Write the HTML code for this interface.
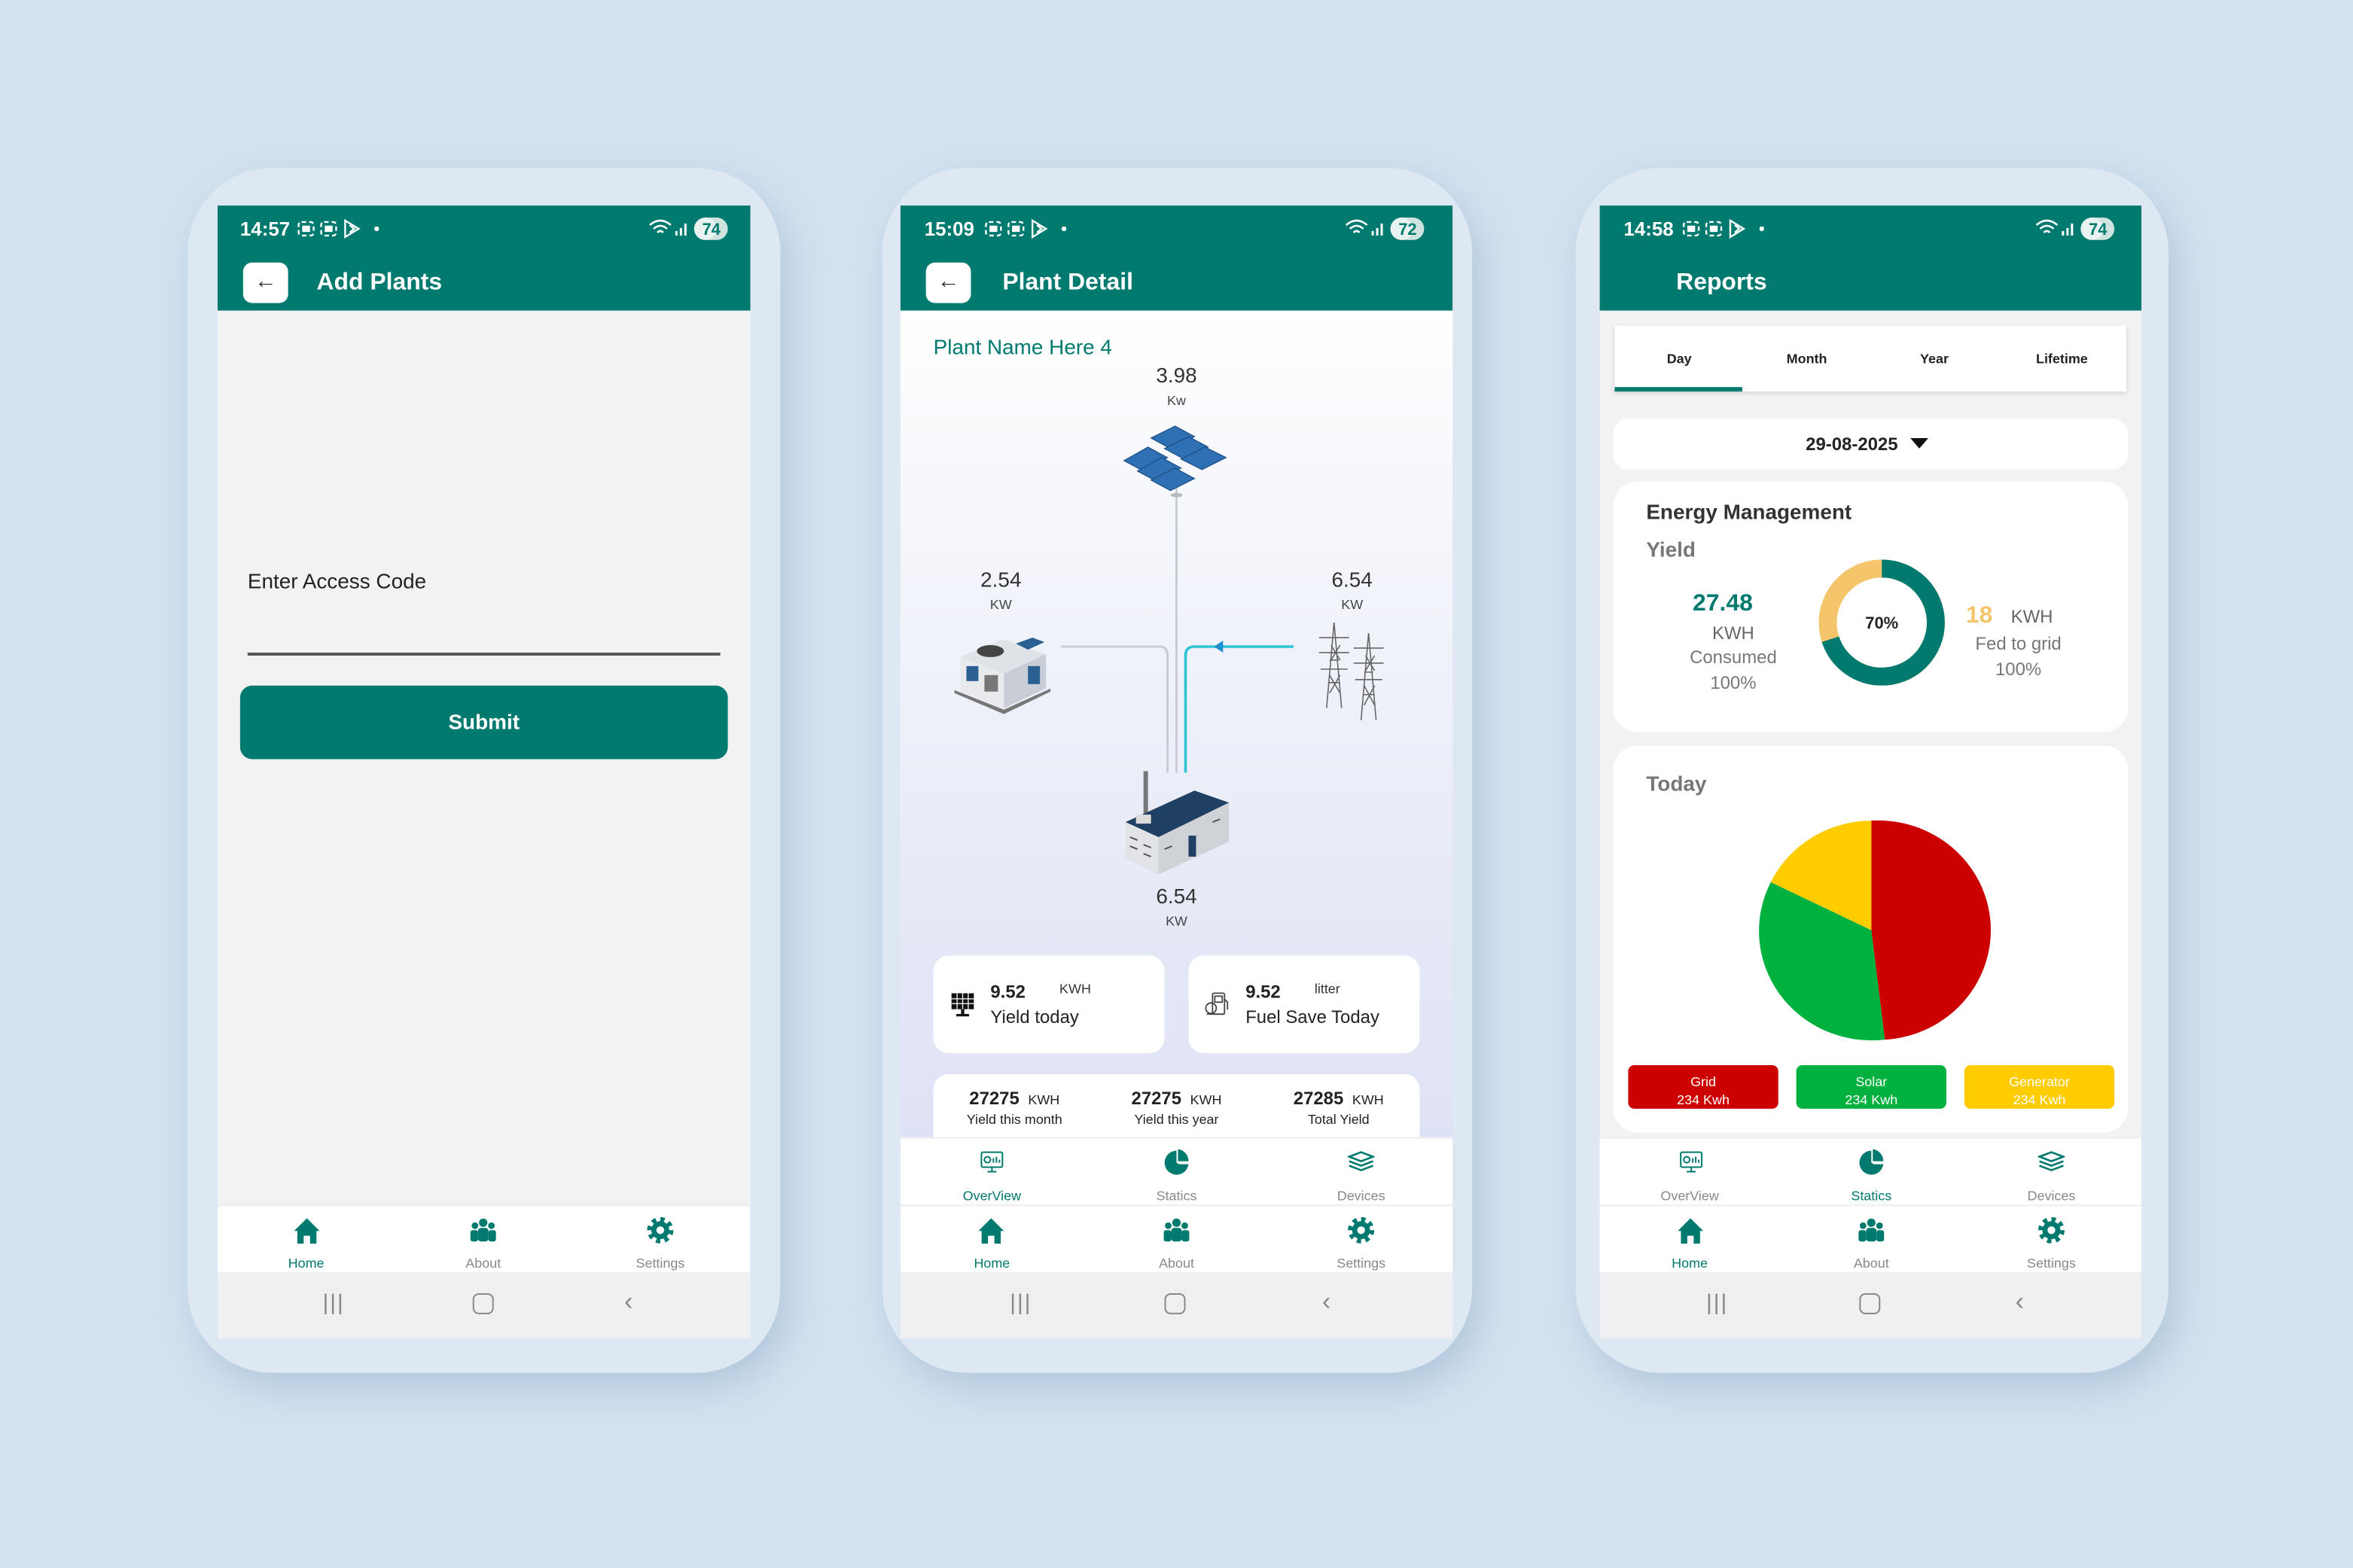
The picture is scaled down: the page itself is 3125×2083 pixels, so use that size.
<!DOCTYPE html>
<html><head><meta charset="utf-8">
<style>
*{margin:0;padding:0;box-sizing:border-box}
html,body{width:3125px;height:2083px;overflow:hidden;background:#d3e2f0}
#w{position:absolute;left:0;top:0;width:1568px;height:1045px;transform:scale(1.993);transform-origin:0 0;font-family:"Liberation Sans",sans-serif;background:#d3e2f0}
.a{position:absolute}
.frame{position:absolute;border-radius:56px;background:#dde8f3;box-shadow:6px 10px 24px rgba(120,150,180,.35)}
.scr{position:absolute;overflow:hidden;background:#f2f2f2}
.hdr{position:absolute;left:0;top:0;width:100%;height:70px;background:#00796e}
.t{position:absolute;white-space:nowrap;line-height:1}
.c{transform:translateX(-50%)}
.time{color:#fff;font-weight:bold;font-size:13px;top:9px}
.title{color:#fff;font-weight:bold;font-size:16px;top:44px}
.back{position:absolute;top:38px;width:30px;height:27px;background:#fff;border-radius:6px;color:#333;font-size:15px;text-align:center;line-height:26px}
.nav{position:absolute;left:0;width:100%;height:45px;background:#fff;border-top:1px solid #eee}
.sys{position:absolute;left:0;width:100%;height:44px;background:#f0f0f2;top:711px}
.lbl{font-size:9px;color:#888}
.card{position:absolute;background:#fff;border-radius:10px}
</style></head><body><div id="w">

<!-- common svg defs via inline -->
<!-- PHONE 1 -->
<div class="frame" style="left:125px;top:112px;width:395px;height:803px"></div>
<div class="scr" style="left:145px;top:137px;width:355px;height:755px">
 <div class="hdr"></div>
 <div class="t time" style="left:15px">14:57</div>
 <svg class="a" style="left:53px;top:9px" width="60" height="13" viewBox="0 0 60 13" fill="none" stroke="#fff" stroke-width="1.2"><rect x="1" y="2" width="10" height="9" rx="2" stroke-dasharray="3 2"/><rect x="4" y="5" width="4" height="3" fill="#fff"/><rect x="16" y="2" width="10" height="9" rx="2" stroke-dasharray="3 2"/><rect x="19" y="5" width="4" height="3" fill="#fff"/><path d="M32 1 L41 6.5 L32 12 Z M35 4 L38 6.5 L35 9"/><circle cx="53" cy="6.5" r="1.6" fill="#fff" stroke="none"/></svg>
 <svg class="a" style="left:287px;top:8px" width="56" height="15" viewBox="0 0 56 15"><path d="M1 5 Q8 -1 15 5 M3.5 7.5 Q8 3.5 12.5 7.5 M6 10 Q8 8 10 10" stroke="#fff" stroke-width="1.3" fill="none"/><rect x="18" y="9" width="1.5" height="3" fill="#fff"/><rect x="21" y="7" width="1.5" height="5" fill="#fff"/><rect x="24" y="4" width="1.5" height="8" fill="#fff"/><rect x="31" y="0" width="22" height="15" rx="7.5" fill="#cfe3df"/><circle cx="38" cy="7.5" r="7.5" fill="#e8f2f0"/><text x="42" y="11.5" font-size="11" font-weight="bold" fill="#00796e" text-anchor="middle" font-family="Liberation Sans">74</text></svg>
 <div class="back" style="left:17px">&#8592;</div>
 <div class="t title" style="left:66px">Add Plants</div>
 <div class="t" style="left:20px;top:243px;font-size:14px;color:#222">Enter Access Code</div>
 <div class="a" style="left:20px;top:298px;width:315px;height:1.5px;background:#555"></div>
 <div class="a" style="left:15px;top:320px;width:325px;height:49px;background:#00796e;border-radius:8px;color:#fff;font-weight:bold;font-size:14px;text-align:center;line-height:49px">Submit</div>
 <div class="nav" style="top:666px">
  <svg class="a" style="left:51px;top:8px" width="17" height="17" viewBox="0 0 16 16"><path d="M0 8 L8 0 L16 8 L14 8 L14 16 L10 16 L10 11 L6 11 L6 16 L2 16 L2 8 Z" fill="#00796e"/></svg>
  <div class="t c lbl" style="left:59px;top:34px;color:#00796e">Home</div>
  <svg class="a" style="left:168px;top:8px" width="18" height="16" viewBox="0 0 18 16" fill="#00796e"><circle cx="9" cy="3" r="2.8"/><circle cx="3.5" cy="5" r="2.2"/><circle cx="14.5" cy="5" r="2.2"/><rect x="5.5" y="6.5" width="7" height="9" rx="2"/><rect x="0.5" y="8" width="5" height="7.5" rx="1.5"/><rect x="12.5" y="8" width="5" height="7.5" rx="1.5"/></svg>
  <div class="t c lbl" style="left:177px;top:34px">About</div>
  <svg class="a" style="left:286px;top:7px" width="18" height="18" viewBox="0 0 18 18"><circle cx="9" cy="9" r="6" fill="#00796e"/><circle cx="9" cy="9" r="7.2" fill="none" stroke="#00796e" stroke-width="3.2" stroke-dasharray="2.8 2.85"/><circle cx="9" cy="9" r="2.6" fill="#fff"/></svg>
  <div class="t c lbl" style="left:295px;top:34px">Settings</div>
 </div>
 <div class="sys">
  <div class="t" style="left:70px;top:13px;font-size:15px;color:#888;letter-spacing:1px">|||</div>
  <div class="a" style="left:170px;top:14px;width:14px;height:14px;border:1.5px solid #888;border-radius:4px"></div>
  <div class="t" style="left:271px;top:11px;font-size:17px;color:#888">&lsaquo;</div>
 </div>
</div>

<!-- PHONE 2 -->
<div class="frame" style="left:588px;top:112px;width:393px;height:803px"></div>
<div class="scr" style="left:600px;top:137px;width:368px;height:755px;background:linear-gradient(#ffffff 70px,#f6f7fc 200px,#e4e8f6 500px,#dfe2f6 621px)">
 <div class="hdr"></div>
 <div class="t time" style="left:16px">15:09</div>
 <svg class="a" style="left:56px;top:9px" width="60" height="13" viewBox="0 0 60 13" fill="none" stroke="#fff" stroke-width="1.2"><rect x="1" y="2" width="10" height="9" rx="2" stroke-dasharray="3 2"/><rect x="4" y="5" width="4" height="3" fill="#fff"/><rect x="16" y="2" width="10" height="9" rx="2" stroke-dasharray="3 2"/><rect x="19" y="5" width="4" height="3" fill="#fff"/><path d="M32 1 L41 6.5 L32 12 Z M35 4 L38 6.5 L35 9"/><circle cx="53" cy="6.5" r="1.6" fill="#fff" stroke="none"/></svg>
 <svg class="a" style="left:296px;top:8px" width="56" height="15" viewBox="0 0 56 15"><path d="M1 5 Q8 -1 15 5 M3.5 7.5 Q8 3.5 12.5 7.5 M6 10 Q8 8 10 10" stroke="#fff" stroke-width="1.3" fill="none"/><rect x="18" y="9" width="1.5" height="3" fill="#fff"/><rect x="21" y="7" width="1.5" height="5" fill="#fff"/><rect x="24" y="4" width="1.5" height="8" fill="#fff"/><rect x="31" y="0" width="22" height="15" rx="7.5" fill="#cfe3df"/><circle cx="38" cy="7.5" r="7.5" fill="#e8f2f0"/><text x="42" y="11.5" font-size="11" font-weight="bold" fill="#00796e" text-anchor="middle" font-family="Liberation Sans">72</text></svg>
 <div class="back" style="left:17px">&#8592;</div>
 <div class="t title" style="left:68px">Plant Detail</div>
 <div class="t" style="left:22px;top:87px;font-size:14px;color:#00796e">Plant Name Here 4</div>
 <!-- diagram -->
 <svg class="a" style="left:0;top:70px" width="368" height="560" viewBox="600 207 368 560" font-family="Liberation Sans">
  <path d="M707 431 H773 Q778 431 778 437 V515" stroke="#c8ccd4" stroke-width="1.5" fill="none"/>
  <path d="M784 325 V515" stroke="#c8ccd4" stroke-width="1.5" fill="none"/>
  <path d="M862 431 H796 Q790 431 790 437 V515" stroke="#2ec4d6" stroke-width="1.8" fill="none"/>
  <path d="M809 431 L815 427 L815 435 Z" fill="#1f8fd0"/>
  <text x="784" y="255" font-size="14" fill="#333" text-anchor="middle">3.98</text>
  <text x="784" y="270" font-size="9" fill="#444" text-anchor="middle">Kw</text>
  <text x="667" y="391" font-size="14" fill="#333" text-anchor="middle">2.54</text>
  <text x="667" y="406" font-size="9" fill="#444" text-anchor="middle">KW</text>
  <text x="901" y="391" font-size="14" fill="#333" text-anchor="middle">6.54</text>
  <text x="901" y="406" font-size="9" fill="#444" text-anchor="middle">KW</text>
  <text x="784" y="602" font-size="14" fill="#333" text-anchor="middle">6.54</text>
  <text x="784" y="617" font-size="9" fill="#444" text-anchor="middle">KW</text>
  <!-- solar panels -->
  <g fill="#2f6fb3" stroke="#1c4f86" stroke-width=".6">
   <path d="M749 307 L765 298 L778 305 L762 314 Z"/>
   <path d="M767 292 L783 284 L796 291 L780 299 Z"/>
   <path d="M758 314 L774 305 L787 312 L771 321 Z"/>
   <path d="M776 299 L792 291 L805 298 L789 306 Z"/>
   <path d="M767 320 L783 312 L796 319 L780 327 Z"/>
   <path d="M787 306 L803 298 L817 305 L801 313 Z"/>
  </g>
  <ellipse cx="784" cy="330" rx="4" ry="1.5" fill="#bbb"/>
  <!-- generator -->
  <path d="M640 438 L668 426 L697 436 L669 449 Z" fill="#dfe3e8"/>
  <path d="M640 438 L669 449 L669 472 L640 461 Z" fill="#e8eaee"/>
  <path d="M669 449 L697 436 L697 459 L669 472 Z" fill="#c9ced6"/>
  <path d="M677 429 L688 425 L696 428 L685 433 Z" fill="#2a5f91"/>
  <ellipse cx="660" cy="434" rx="9" ry="4" fill="#444"/>
  <rect x="644" y="444" width="8" height="10" fill="#2a5f91"/>
  <rect x="656" y="450" width="9" height="11" fill="#777"/>
  <rect x="685" y="444" width="8" height="12" fill="#2a5f91"/>
  <path d="M636 462 L669 476 L700 461 L700 459 L669 473 L636 460 Z" fill="#777"/>
  <!-- towers -->
  <g stroke="#666" stroke-width=".8" fill="none">
   <path d="M884 472 L889 415 L894 472 M886 440 L892 440 M885 455 L893 455 M879 425 L899 425 M879 435 L899 435 M880 446 L898 446 M887 430 L893 440 M893 430 L887 440 M886 450 L893 462 M893 450 L886 462"/>
   <path d="M907 480 L912 422 L917 480 M909 448 L915 448 M908 463 L916 463 M902 432 L922 432 M902 442 L922 442 M903 453 L921 453 M910 437 L916 447 M916 437 L910 447 M909 457 L916 470 M916 457 L909 470"/>
  </g>
  <!-- factory -->
  <rect x="762" y="514" width="3" height="30" fill="#777"/>
  <path d="M750 548 L796 527 L819 535 L772 558 Z" fill="#1f3f63"/>
  <path d="M750 548 L772 558 L772 583 L750 572 Z" fill="#e1e3e6"/>
  <path d="M772 558 L819 535 L819 561 L772 583 Z" fill="#cfd3d8"/>
  <rect x="757" y="543" width="10" height="6" fill="#ddd"/>
  <rect x="792" y="557" width="5" height="14" fill="#1f3f63"/>
  <g stroke="#555" stroke-width="1"><path d="M753 558 L758 560 M753 564 L758 566 M762 563 L767 565 M762 569 L767 571 M776 566 L781 564 M808 548 L813 546"/></g>
 </svg>
 <!-- cards -->
 <div class="card" style="left:22px;top:500px;width:154px;height:65px"></div>
 <svg class="a" style="left:33px;top:524px" width="17" height="17" viewBox="0 0 16 16"><rect x="1" y="1" width="14" height="10" fill="#111"/><path d="M1 4.5H15M1 7.5H15M4.5 1V11M8 1V11M11.5 1V11" stroke="#fff" stroke-width=".6"/><rect x="7" y="11" width="2" height="3" fill="#111"/><rect x="4" y="14" width="8" height="1.5" fill="#111"/></svg>
 <div class="t" style="left:60px;top:518px;font-size:12px;font-weight:bold;color:#222">9.52</div>
 <div class="t" style="left:106px;top:518px;font-size:9px;color:#333">KWH</div>
 <div class="t" style="left:60px;top:535px;font-size:12px;color:#222">Yield today</div>
 <div class="card" style="left:192px;top:500px;width:154px;height:65px"></div>
 <svg class="a" style="left:202px;top:523px" width="18" height="18" viewBox="0 0 18 18" fill="none" stroke="#444" stroke-width=".9"><rect x="6" y="2" width="8" height="14" rx="1"/><rect x="7.5" y="4" width="5" height="4"/><path d="M14 6 L16 8 V13"/><circle cx="5" cy="12" r="3.5"/><path d="M2 16 H14"/></svg>
 <div class="t" style="left:230px;top:518px;font-size:12px;font-weight:bold;color:#222">9.52</div>
 <div class="t" style="left:276px;top:518px;font-size:9px;color:#333">litter</div>
 <div class="t" style="left:230px;top:535px;font-size:12px;color:#222">Fuel Save Today</div>
 <div class="card" style="left:22px;top:579px;width:324px;height:50px;border-radius:10px 10px 0 0"></div>
 <div class="t c" style="left:76px;top:589px;font-size:12px;font-weight:bold;color:#222">27275 <span style="font-size:9px;font-weight:normal">&nbsp;KWH</span></div>
 <div class="t c" style="left:76px;top:605px;font-size:9px;color:#222">Yield this month</div>
 <div class="t c" style="left:184px;top:589px;font-size:12px;font-weight:bold;color:#222">27275 <span style="font-size:9px;font-weight:normal">&nbsp;KWH</span></div>
 <div class="t c" style="left:184px;top:605px;font-size:9px;color:#222">Yield this year</div>
 <div class="t c" style="left:292px;top:589px;font-size:12px;font-weight:bold;color:#222">27285 <span style="font-size:9px;font-weight:normal">&nbsp;KWH</span></div>
 <div class="t c" style="left:292px;top:605px;font-size:9px;color:#222">Total Yield</div>
 <!-- tab bar -->
 <div class="nav" style="top:621px">
  <svg class="a" style="left:53px;top:8px" width="16" height="15" viewBox="0 0 16 15" fill="none" stroke="#00796e" stroke-width="1"><rect x="1" y="1" width="14" height="10" rx="1"/><path d="M8 11V14M5 14H11"/><circle cx="5" cy="6" r="2"/><path d="M9 8V5M11 8V4M13 8V6"/></svg>
  <div class="t c lbl" style="left:61px;top:34px;color:#00796e">OverView</div>
  <svg class="a" style="left:175px;top:7px" width="18" height="18" viewBox="0 0 18 18"><path d="M9 1 A8 8 0 1 0 16 13 L9 9 Z" fill="#00796e"/><path d="M10 0 A8 8 0 0 1 17 8 L10 8 Z" fill="#00796e"/><path d="M10.5 10 L17 10 A8 8 0 0 1 15.5 13.5 Z" fill="#00796e"/></svg>
  <div class="t c lbl" style="left:184px;top:34px">Statics</div>
  <svg class="a" style="left:298px;top:8px" width="18" height="15" viewBox="0 0 18 15" fill="none" stroke="#00796e" stroke-width="1.3"><path d="M1 4 L9 1 L17 4 L9 7 Z"/><path d="M1 7 L9 10 L17 7"/><path d="M1 10 L9 13 L17 10"/></svg>
  <div class="t c lbl" style="left:307px;top:34px">Devices</div>
 </div>
 <div class="nav" style="top:666px">
  <svg class="a" style="left:52px;top:8px" width="17" height="17" viewBox="0 0 16 16"><path d="M0 8 L8 0 L16 8 L14 8 L14 16 L10 16 L10 11 L6 11 L6 16 L2 16 L2 8 Z" fill="#00796e"/></svg>
  <div class="t c lbl" style="left:61px;top:34px;color:#00796e">Home</div>
  <svg class="a" style="left:175px;top:8px" width="18" height="16" viewBox="0 0 18 16" fill="#00796e"><circle cx="9" cy="3" r="2.8"/><circle cx="3.5" cy="5" r="2.2"/><circle cx="14.5" cy="5" r="2.2"/><rect x="5.5" y="6.5" width="7" height="9" rx="2"/><rect x="0.5" y="8" width="5" height="7.5" rx="1.5"/><rect x="12.5" y="8" width="5" height="7.5" rx="1.5"/></svg>
  <div class="t c lbl" style="left:184px;top:34px">About</div>
  <svg class="a" style="left:298px;top:7px" width="18" height="18" viewBox="0 0 18 18"><circle cx="9" cy="9" r="6" fill="#00796e"/><circle cx="9" cy="9" r="7.2" fill="none" stroke="#00796e" stroke-width="3.2" stroke-dasharray="2.8 2.85"/><circle cx="9" cy="9" r="2.6" fill="#fff"/></svg>
  <div class="t c lbl" style="left:307px;top:34px">Settings</div>
 </div>
 <div class="sys">
  <div class="t" style="left:73px;top:13px;font-size:15px;color:#888;letter-spacing:1px">|||</div>
  <div class="a" style="left:176px;top:14px;width:14px;height:14px;border:1.5px solid #888;border-radius:4px"></div>
  <div class="t" style="left:281px;top:11px;font-size:17px;color:#888">&lsaquo;</div>
 </div>
</div>

<!-- PHONE 3 -->
<div class="frame" style="left:1050px;top:112px;width:395px;height:803px"></div>
<div class="scr" style="left:1066px;top:137px;width:361px;height:755px">
 <div class="hdr"></div>
 <div class="t time" style="left:16px">14:58</div>
 <svg class="a" style="left:55px;top:9px" width="60" height="13" viewBox="0 0 60 13" fill="none" stroke="#fff" stroke-width="1.2"><rect x="1" y="2" width="10" height="9" rx="2" stroke-dasharray="3 2"/><rect x="4" y="5" width="4" height="3" fill="#fff"/><rect x="16" y="2" width="10" height="9" rx="2" stroke-dasharray="3 2"/><rect x="19" y="5" width="4" height="3" fill="#fff"/><path d="M32 1 L41 6.5 L32 12 Z M35 4 L38 6.5 L35 9"/><circle cx="53" cy="6.5" r="1.6" fill="#fff" stroke="none"/></svg>
 <svg class="a" style="left:290px;top:8px" width="56" height="15" viewBox="0 0 56 15"><path d="M1 5 Q8 -1 15 5 M3.5 7.5 Q8 3.5 12.5 7.5 M6 10 Q8 8 10 10" stroke="#fff" stroke-width="1.3" fill="none"/><rect x="18" y="9" width="1.5" height="3" fill="#fff"/><rect x="21" y="7" width="1.5" height="5" fill="#fff"/><rect x="24" y="4" width="1.5" height="8" fill="#fff"/><rect x="31" y="0" width="22" height="15" rx="7.5" fill="#cfe3df"/><circle cx="38" cy="7.5" r="7.5" fill="#e8f2f0"/><text x="42" y="11.5" font-size="11" font-weight="bold" fill="#00796e" text-anchor="middle" font-family="Liberation Sans">74</text></svg>
 <div class="t title" style="left:51px">Reports</div>
 <!-- tabs -->
 <div class="a" style="left:10px;top:80px;width:341px;height:44px;background:#fff;box-shadow:0 1px 3px rgba(0,0,0,.15)"></div>
 <div class="a" style="left:10px;top:121px;width:85px;height:3px;background:#00796e"></div>
 <div class="t c" style="left:53px;top:98px;font-size:9px;font-weight:bold;color:#222">Day</div>
 <div class="t c" style="left:138px;top:98px;font-size:9px;font-weight:bold;color:#222">Month</div>
 <div class="t c" style="left:223px;top:98px;font-size:9px;font-weight:bold;color:#222">Year</div>
 <div class="t c" style="left:308px;top:98px;font-size:9px;font-weight:bold;color:#222">Lifetime</div>
 <div class="card" style="left:9px;top:142px;width:343px;height:34px"></div>
 <div class="t c" style="left:168px;top:153px;font-size:12px;font-weight:bold;color:#222">29-08-2025</div>
 <svg class="a" style="left:207px;top:155px" width="12" height="7"><path d="M0 0H12L6 7Z" fill="#111"/></svg>
 <!-- energy card -->
 <div class="card" style="left:9px;top:184px;width:343px;height:167px;border-radius:16px"></div>
 <div class="t" style="left:31px;top:197px;font-size:14px;font-weight:bold;color:#333">Energy Management</div>
 <div class="t" style="left:31px;top:222px;font-size:14px;font-weight:bold;color:#777">Yield</div>
 <div class="t c" style="left:82px;top:258px;font-size:16px;font-weight:bold;color:#00796e">27.48</div>
 <div class="t c" style="left:89px;top:279px;font-size:12px;color:#666">KWH</div>
 <div class="t c" style="left:89px;top:295px;font-size:12px;color:#777">Consumed</div>
 <div class="t c" style="left:89px;top:312px;font-size:12px;color:#777">100%</div>
 <svg class="a" style="left:146px;top:236px" width="84" height="84" viewBox="0 0 84 84"><circle cx="42" cy="42" r="36" fill="none" stroke="#f5c56b" stroke-width="12"/><circle cx="42" cy="42" r="36" fill="none" stroke="#00796e" stroke-width="12" stroke-dasharray="158.3 300" transform="rotate(-90 42 42)"/><text x="42" y="46" font-size="11" font-weight="bold" fill="#222" text-anchor="middle" font-family="Liberation Sans">70%</text></svg>
 <div class="t" style="left:244px;top:266px;font-size:16px;font-weight:bold;color:#f5c56b">18</div>
 <div class="t" style="left:274px;top:268px;font-size:12px;color:#666">KWH</div>
 <div class="t c" style="left:279px;top:286px;font-size:12px;color:#777">Fed to grid</div>
 <div class="t c" style="left:279px;top:303px;font-size:12px;color:#777">100%</div>
 <!-- today card -->
 <div class="card" style="left:9px;top:360px;width:343px;height:258px;border-radius:16px"></div>
 <div class="t" style="left:31px;top:378px;font-size:14px;font-weight:bold;color:#777">Today</div>
 <svg class="a" style="left:0;top:0" width="361" height="755" viewBox="1066 137 361 755">
  <path d="M1247 620 L1247 547 A75 73 0 0 1 1256 693 Z" fill="#cc0000"/>
  <path d="M1247 620 L1256 693 A75 73 0 0 1 1180 588 Z" fill="#00b140"/>
  <path d="M1247 620 L1180 588 A75 73 0 0 1 1247 547 Z" fill="#ffcc00"/>
 </svg>
 <div class="a" style="left:19px;top:573px;width:100px;height:29px;background:#cc0000;border-radius:4px"></div>
 <div class="a" style="left:131px;top:573px;width:100px;height:29px;background:#00b140;border-radius:4px"></div>
 <div class="a" style="left:243px;top:573px;width:100px;height:29px;background:#ffcc00;border-radius:4px"></div>
 <div class="t c" style="left:69px;top:578px;font-size:9px;color:#fff;text-align:center;line-height:12px">Grid<br>234 Kwh</div>
 <div class="t c" style="left:181px;top:578px;font-size:9px;color:#fff;text-align:center;line-height:12px">Solar<br>234 Kwh</div>
 <div class="t c" style="left:293px;top:578px;font-size:9px;color:#fff;text-align:center;line-height:12px">Generator<br>234 Kwh</div>
 <!-- tab bar -->
 <div class="nav" style="top:621px">
  <svg class="a" style="left:53px;top:8px" width="16" height="15" viewBox="0 0 16 15" fill="none" stroke="#00796e" stroke-width="1"><rect x="1" y="1" width="14" height="10" rx="1"/><path d="M8 11V14M5 14H11"/><circle cx="5" cy="6" r="2"/><path d="M9 8V5M11 8V4M13 8V6"/></svg>
  <div class="t c lbl" style="left:60px;top:34px">OverView</div>
  <svg class="a" style="left:172px;top:7px" width="18" height="18" viewBox="0 0 18 18"><path d="M9 1 A8 8 0 1 0 16 13 L9 9 Z" fill="#00796e"/><path d="M10 0 A8 8 0 0 1 17 8 L10 8 Z" fill="#00796e"/><path d="M10.5 10 L17 10 A8 8 0 0 1 15.5 13.5 Z" fill="#00796e"/></svg>
  <div class="t c lbl" style="left:181px;top:34px;color:#00796e">Statics</div>
  <svg class="a" style="left:292px;top:8px" width="18" height="15" viewBox="0 0 18 15" fill="none" stroke="#00796e" stroke-width="1.3"><path d="M1 4 L9 1 L17 4 L9 7 Z"/><path d="M1 7 L9 10 L17 7"/><path d="M1 10 L9 13 L17 10"/></svg>
  <div class="t c lbl" style="left:301px;top:34px">Devices</div>
 </div>
 <div class="nav" style="top:666px">
  <svg class="a" style="left:52px;top:8px" width="17" height="17" viewBox="0 0 16 16"><path d="M0 8 L8 0 L16 8 L14 8 L14 16 L10 16 L10 11 L6 11 L6 16 L2 16 L2 8 Z" fill="#00796e"/></svg>
  <div class="t c lbl" style="left:60px;top:34px;color:#00796e">Home</div>
  <svg class="a" style="left:172px;top:8px" width="18" height="16" viewBox="0 0 18 16" fill="#00796e"><circle cx="9" cy="3" r="2.8"/><circle cx="3.5" cy="5" r="2.2"/><circle cx="14.5" cy="5" r="2.2"/><rect x="5.5" y="6.5" width="7" height="9" rx="2"/><rect x="0.5" y="8" width="5" height="7.5" rx="1.5"/><rect x="12.5" y="8" width="5" height="7.5" rx="1.5"/></svg>
  <div class="t c lbl" style="left:181px;top:34px">About</div>
  <svg class="a" style="left:292px;top:7px" width="18" height="18" viewBox="0 0 18 18"><circle cx="9" cy="9" r="6" fill="#00796e"/><circle cx="9" cy="9" r="7.2" fill="none" stroke="#00796e" stroke-width="3.2" stroke-dasharray="2.8 2.85"/><circle cx="9" cy="9" r="2.6" fill="#fff"/></svg>
  <div class="t c lbl" style="left:301px;top:34px">Settings</div>
 </div>
 <div class="sys">
  <div class="t" style="left:71px;top:13px;font-size:15px;color:#888;letter-spacing:1px">|||</div>
  <div class="a" style="left:173px;top:14px;width:14px;height:14px;border:1.5px solid #888;border-radius:4px"></div>
  <div class="t" style="left:277px;top:11px;font-size:17px;color:#888">&lsaquo;</div>
 </div>
</div>

</div></body></html>
